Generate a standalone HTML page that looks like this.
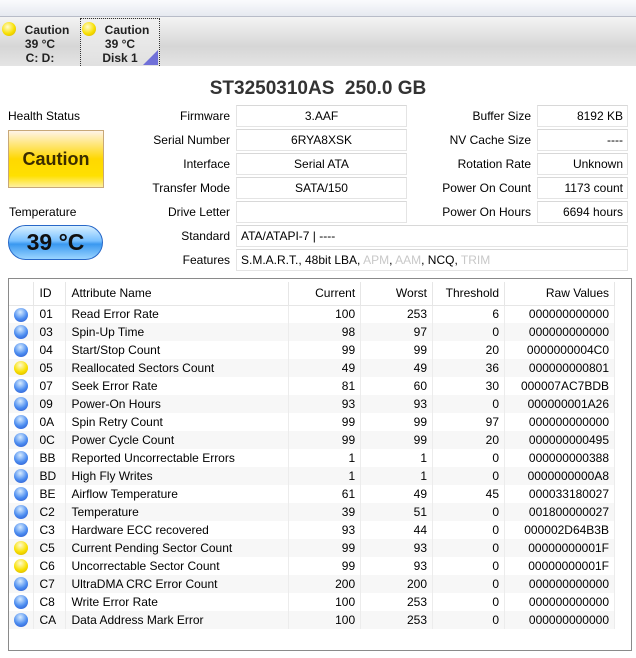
<!DOCTYPE html>
<html><head><meta charset="utf-8"><style>
*{margin:0;padding:0;box-sizing:border-box}
body{width:636px;height:658px;background:#fff;font-family:"Liberation Sans",sans-serif;font-size:12px;color:#000;position:relative;overflow:hidden}
.a{position:absolute}
.lbl{position:absolute;text-align:right;white-space:nowrap}
.box{position:absolute;height:22px;border:1px solid #e4e4e4;border-top-color:#d8d8d8;line-height:20px;padding:0 4px;background:#fff;white-space:nowrap}
.tab{position:absolute;top:18px;height:48px;text-align:center;font-weight:bold;font-size:12px;line-height:14px;color:#222}
.dot{position:absolute;width:14px;height:14px;border-radius:50%;background:radial-gradient(circle at 40% 35%,#fffbd0,#f8e000 55%,#d2a800)}
table{border-collapse:collapse;position:absolute;left:9px;top:282px;width:606px;font-size:12px}
td,th{height:18px;padding:0 5px;white-space:nowrap;font-weight:normal}
th{height:23px;border-right:1px solid #e6e6e6;border-bottom:1px solid #e6e6e6}
td{border-right:1px solid #ececec}
tr:nth-child(odd) td{background:#f7f7f7}
.r{text-align:right}
.bd{display:inline-block;width:14px;height:14px;border-radius:50%;vertical-align:middle;background:radial-gradient(circle at 45% 30%,#d8ecff,#4b8cf0 55%,#2850c8)}
.yd{display:inline-block;width:14px;height:14px;border-radius:50%;vertical-align:middle;background:radial-gradient(circle at 45% 30%,#fffbd0,#f8e000 55%,#d0a800)}
</style></head><body>
<div class="a" style="left:0;top:0;width:636px;height:17px;background:linear-gradient(#fafbfd,#e6e9f0);border-bottom:1px solid #b8bcc8"></div>
<div class="a" style="left:0;top:17px;width:636px;height:49px;background:linear-gradient(#f4f4f4,#d6d6d6 60%,#e4e4e4)"></div>
<div class="tab" style="left:0;width:80px"><div class="dot" style="left:2px;top:4px"></div><div style="margin-top:5px;padding-left:14px">Caution</div><div>39 °C</div><div>C: D:</div></div>
<div class="tab" style="left:80px;width:80px;border:1px dotted #333;border-bottom:none;background:linear-gradient(#f0f0f0,#e0e0e0)"><div class="dot" style="left:1px;top:3px"></div><div style="margin-top:4px;padding-left:14px">Caution</div><div>39 °C</div><div>Disk 1</div><div class="a" style="right:1px;bottom:1px;width:0;height:0;border-left:15px solid transparent;border-bottom:15px solid #7070d8"></div></div>
<div class="a" style="left:0;top:78px;width:636px;text-align:center;font-weight:bold;font-size:19px;color:#333">ST3250310AS&nbsp; 250.0 GB</div>
<div class="a" style="left:8px;top:109px">Health Status</div>
<div class="a" style="left:8px;top:130px;width:96px;height:58px;border:1px solid #c8a878;background:linear-gradient(#fff4e8,#ffd800 50%,#ffe000 80%,#fff0a0);text-align:center;line-height:56px;font-weight:bold;font-size:18px;color:#3a2c00">Caution</div>
<div class="a" style="left:9px;top:205px">Temperature</div>
<div class="a" style="left:8px;top:225px;width:95px;height:35px;border:1px solid #2868c8;border-radius:18px;background:linear-gradient(#d8f0ff,#78c0ff 45%,#3a98f0 55%,#9ad4ff);text-align:center;line-height:33px;font-weight:bold;font-size:23px;color:#101010">39 °C</div>
<div class="lbl" style="right:406px;top:109px">Firmware</div>
<div class="lbl" style="right:406px;top:133px">Serial Number</div>
<div class="lbl" style="right:406px;top:157px">Interface</div>
<div class="lbl" style="right:406px;top:181px">Transfer Mode</div>
<div class="lbl" style="right:406px;top:205px">Drive Letter</div>
<div class="lbl" style="right:406px;top:229px">Standard</div>
<div class="lbl" style="right:406px;top:253px">Features</div>
<div class="box" style="left:236px;top:105px;width:171px;text-align:center">3.AAF</div>
<div class="box" style="left:236px;top:129px;width:171px;text-align:center">6RYA8XSK</div>
<div class="box" style="left:236px;top:153px;width:171px;text-align:center">Serial ATA</div>
<div class="box" style="left:236px;top:177px;width:171px;text-align:center">SATA/150</div>
<div class="box" style="left:236px;top:201px;width:171px"></div>
<div class="box" style="left:236px;top:225px;width:392px">ATA/ATAPI-7 | ----</div>
<div class="box" style="left:236px;top:249px;width:392px">S.M.A.R.T., 48bit LBA, <span style="color:#c8c8c8">APM</span>, <span style="color:#c8c8c8">AAM</span>, NCQ, <span style="color:#c8c8c8">TRIM</span></div>
<div class="lbl" style="right:105px;top:109px">Buffer Size</div>
<div class="lbl" style="right:105px;top:133px">NV Cache Size</div>
<div class="lbl" style="right:105px;top:157px">Rotation Rate</div>
<div class="lbl" style="right:105px;top:181px">Power On Count</div>
<div class="lbl" style="right:105px;top:205px">Power On Hours</div>
<div class="box" style="left:537px;top:105px;width:91px;text-align:right">8192 KB</div>
<div class="box" style="left:537px;top:129px;width:91px;text-align:right">----</div>
<div class="box" style="left:537px;top:153px;width:91px;text-align:right">Unknown</div>
<div class="box" style="left:537px;top:177px;width:91px;text-align:right">1173 count</div>
<div class="box" style="left:537px;top:201px;width:91px;text-align:right">6694 hours</div>
<div class="a" style="left:8px;top:278px;width:624px;height:373px;border:1px solid #8a8a8a"></div>
<table>
<tr><th style="width:25px"></th><th style="width:32px;text-align:left">ID</th><th style="width:223px;text-align:left">Attribute Name</th><th class="r" style="width:72px">Current</th><th class="r" style="width:72px">Worst</th><th class="r" style="width:72px">Threshold</th><th class="r" style="width:110px">Raw Values</th></tr>
<tr><td><span class="bd"></span></td><td>01</td><td>Read Error Rate</td><td class="r">100</td><td class="r">253</td><td class="r">6</td><td class="r">000000000000</td></tr>
<tr><td><span class="bd"></span></td><td>03</td><td>Spin-Up Time</td><td class="r">98</td><td class="r">97</td><td class="r">0</td><td class="r">000000000000</td></tr>
<tr><td><span class="bd"></span></td><td>04</td><td>Start/Stop Count</td><td class="r">99</td><td class="r">99</td><td class="r">20</td><td class="r">0000000004C0</td></tr>
<tr><td><span class="yd"></span></td><td>05</td><td>Reallocated Sectors Count</td><td class="r">49</td><td class="r">49</td><td class="r">36</td><td class="r">000000000801</td></tr>
<tr><td><span class="bd"></span></td><td>07</td><td>Seek Error Rate</td><td class="r">81</td><td class="r">60</td><td class="r">30</td><td class="r">000007AC7BDB</td></tr>
<tr><td><span class="bd"></span></td><td>09</td><td>Power-On Hours</td><td class="r">93</td><td class="r">93</td><td class="r">0</td><td class="r">000000001A26</td></tr>
<tr><td><span class="bd"></span></td><td>0A</td><td>Spin Retry Count</td><td class="r">99</td><td class="r">99</td><td class="r">97</td><td class="r">000000000000</td></tr>
<tr><td><span class="bd"></span></td><td>0C</td><td>Power Cycle Count</td><td class="r">99</td><td class="r">99</td><td class="r">20</td><td class="r">000000000495</td></tr>
<tr><td><span class="bd"></span></td><td>BB</td><td>Reported Uncorrectable Errors</td><td class="r">1</td><td class="r">1</td><td class="r">0</td><td class="r">000000000388</td></tr>
<tr><td><span class="bd"></span></td><td>BD</td><td>High Fly Writes</td><td class="r">1</td><td class="r">1</td><td class="r">0</td><td class="r">0000000000A8</td></tr>
<tr><td><span class="bd"></span></td><td>BE</td><td>Airflow Temperature</td><td class="r">61</td><td class="r">49</td><td class="r">45</td><td class="r">000033180027</td></tr>
<tr><td><span class="bd"></span></td><td>C2</td><td>Temperature</td><td class="r">39</td><td class="r">51</td><td class="r">0</td><td class="r">001800000027</td></tr>
<tr><td><span class="bd"></span></td><td>C3</td><td>Hardware ECC recovered</td><td class="r">93</td><td class="r">44</td><td class="r">0</td><td class="r">000002D64B3B</td></tr>
<tr><td><span class="yd"></span></td><td>C5</td><td>Current Pending Sector Count</td><td class="r">99</td><td class="r">93</td><td class="r">0</td><td class="r">00000000001F</td></tr>
<tr><td><span class="yd"></span></td><td>C6</td><td>Uncorrectable Sector Count</td><td class="r">99</td><td class="r">93</td><td class="r">0</td><td class="r">00000000001F</td></tr>
<tr><td><span class="bd"></span></td><td>C7</td><td>UltraDMA CRC Error Count</td><td class="r">200</td><td class="r">200</td><td class="r">0</td><td class="r">000000000000</td></tr>
<tr><td><span class="bd"></span></td><td>C8</td><td>Write Error Rate</td><td class="r">100</td><td class="r">253</td><td class="r">0</td><td class="r">000000000000</td></tr>
<tr><td><span class="bd"></span></td><td>CA</td><td>Data Address Mark Error</td><td class="r">100</td><td class="r">253</td><td class="r">0</td><td class="r">000000000000</td></tr>
</table>
</body></html>
